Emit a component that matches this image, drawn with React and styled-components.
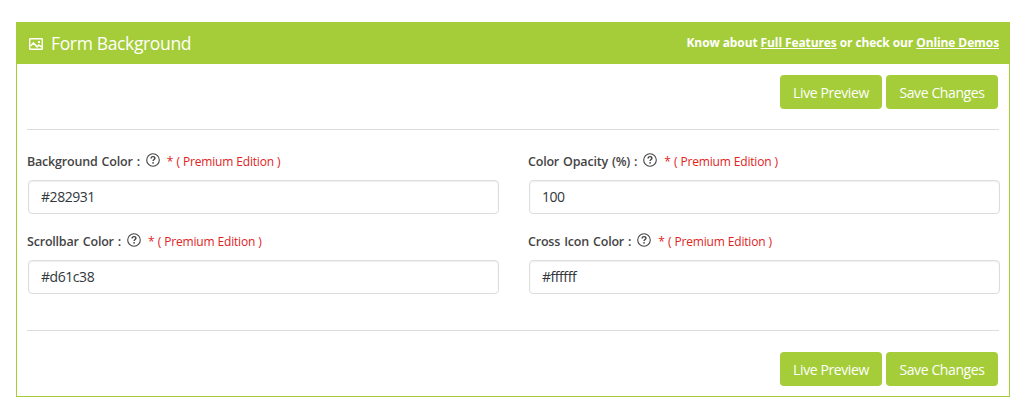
import React from 'react';
import styled, { createGlobalStyle } from 'styled-components';

const GREEN = '#a4cd39';

const GlobalStyle = createGlobalStyle`
  *, *::before, *::after { box-sizing: border-box; }
  body {
    margin: 0;
    background: #fff;
    color: #444;
    font-family: 'Segoe UI', 'Open Sans', 'Noto Sans', sans-serif;
    font-size: 14px;
  }
`;

const Page = styled.main`
  padding: 22px 20px 0 16px;
`;

const Panel = styled.section`
  width: 994px;
  height: 375px;
  border: 1px solid ${GREEN};
`;

const Header = styled.header`
  display: flex;
  justify-content: space-between;
  height: 41px;
  padding: 0 10px 0 12px;
  background: ${GREEN};
  color: #fff;
`;

const Title = styled.div`
  display: flex;
  align-items: center;
  gap: 7px;
  padding-top: 1px;
  font-size: 17.5px;
  line-height: 24px;
  white-space: nowrap;
`;

const TitleText = styled.span`
  padding-bottom: 2px;
  letter-spacing: -0.35px;
`;

const HeaderNote = styled.p`
  margin: 0;
  font-size: 12px;
  font-weight: 700;
  line-height: 39px;
  white-space: nowrap;
  letter-spacing: -0.1px;
`;

const NoteLink = styled.a`
  color: #fff;
  text-decoration: underline;
`;

const Body = styled.div`
  padding: 11px 9px 0 10px;
`;

const Actions = styled.div`
  display: flex;
  justify-content: flex-end;
  gap: 4px;
  padding-right: 2px;
`;

const Button = styled.button`
  width: ${(p) => p.$width}px;
  height: 34px;
  padding: 1px 0 0;
  border: 0;
  border-radius: 4px;
  background: ${GREEN};
  color: #fff;
  font: inherit;
  font-size: 14px;
  letter-spacing: -0.4px;
  white-space: nowrap;
`;

const Divider = styled.hr`
  height: 1px;
  margin: ${(p) => p.$top}px 1px ${(p) => p.$bottom}px 0;
  border: 0;
  background: #ddd;
`;

const Fields = styled.div`
  display: grid;
  grid-template-columns: 472px 472px;
  column-gap: 29px;
`;

const Field = styled.div`
  height: 80px;
`;

const LabelRow = styled.div`
  display: flex;
  align-items: center;
  height: 20px;
  margin-bottom: 9px;
  white-space: nowrap;
`;

const Label = styled.label`
  font-size: 12.5px;
  font-weight: 600;
  letter-spacing: -0.2px;
  word-spacing: 1px;
`;

const Help = styled.svg`
  flex: none;
  width: 14px;
  height: 14px;
  margin: 0 7px 2px 6px;
`;

const Premium = styled.span`
  color: #e02222;
  font-size: 12px;
  font-weight: 500;
  letter-spacing: -0.2px;
  word-spacing: 0.3px;
`;

const Input = styled.input`
  display: block;
  width: 471px;
  height: 34px;
  margin-left: 1px;
  padding: 0 12px 2px;
  border: 1px solid #ddd;
  border-radius: 4px;
  background: #fff;
  box-shadow: inset 0 1px 2px rgba(0, 0, 0, 0.07);
  color: #32373c;
  font: inherit;
  font-size: 14px;
  letter-spacing: -0.45px;
  outline: 0;
`;

const PictureIcon = () => (
  <svg width="15" height="13" viewBox="0 0 15 13" fill="none" aria-hidden="true">
    <rect x="0.7" y="0.7" width="12.6" height="10.6" rx="0.5" stroke="#fff" strokeWidth="1.4" />
    <path d="M1.5 8 4.5 5 8 8.8 9.8 7.1 13 9.2" stroke="#fff" strokeWidth="1.6" />
    <rect x="9" y="3" width="2" height="2" fill="#fff" />
  </svg>
);

const HelpIcon = () => (
  <Help viewBox="0 0 14 14" fill="none" aria-hidden="true">
    <circle cx="7" cy="7" r="6.3" stroke="#444" strokeWidth="1.1" />
    <path d="M5.1 5.4C5.1 4.2 5.9 3.6 7 3.6s1.9.6 1.9 1.6c0 1.3-1.8 1.3-1.8 2.9" stroke="#444" strokeWidth="1.4" />
    <rect x="6.3" y="9.1" width="1.5" height="1.5" fill="#444" />
  </Help>
);

const FormActions = () => (
  <Actions>
    <Button $width={102}>Live Preview</Button>
    <Button $width={112}>Save Changes</Button>
  </Actions>
);

const fields = [
  { id: 'background', label: 'Background Color :', value: '#282931' },
  { id: 'opacity', label: 'Color Opacity (%) :', value: '100' },
  { id: 'scrollbar', label: 'Scrollbar Color :', value: '#d61c38' },
  { id: 'cross', label: 'Cross Icon Color :', value: '#ffffff' },
];

export default function App() {
  return (
    <Page>
      <GlobalStyle />
      <Panel>
        <Header>
          <Title>
            <PictureIcon />
            <TitleText>Form Background</TitleText>
          </Title>
          <HeaderNote>
            Know about <NoteLink>Full Features</NoteLink> or check our <NoteLink>Online Demos</NoteLink>
          </HeaderNote>
        </Header>
        <Body>
          <FormActions />
          <Divider $top={20} $bottom={21} />
          <Fields>
            {fields.map((f) => (
              <Field key={f.id}>
                <LabelRow>
                  <Label htmlFor={f.id}>{f.label}</Label>
                  <HelpIcon />
                  <Premium>* ( Premium Edition )</Premium>
                </LabelRow>
                <Input id={f.id} defaultValue={f.value} />
              </Field>
            ))}
          </Fields>
          <Divider $top={19} $bottom={21} />
          <FormActions />
        </Body>
      </Panel>
    </Page>
  );
}
